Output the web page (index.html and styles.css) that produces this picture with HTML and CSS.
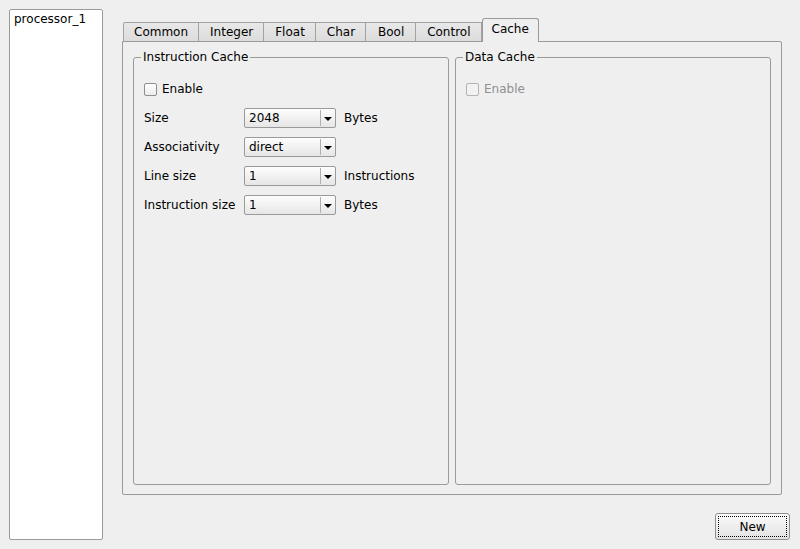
FILE: index.html
```html
<!DOCTYPE html>
<html lang="en">
<head>
    <meta charset="UTF-8">
    <title>Processor Settings</title>
    <link rel="stylesheet" href="styles.css">
</head>
<body>
    <div class="window">
        <div class="proc-list">
            <div class="proc-item">processor_1</div>
        </div>

        <div class="main">
            <div class="tab-bar">
                <div class="tab">Common</div>
                <div class="tab">Integer</div>
                <div class="tab">Float</div>
                <div class="tab">Char</div>
                <div class="tab">Bool</div>
                <div class="tab">Control</div>
                <div class="tab active">Cache</div>
            </div>

            <div class="tab-pane">
                <fieldset class="group">
                    <legend>Instruction Cache</legend>
                    <label class="check-row">
                        <span class="check"></span>
                        <span>Enable</span>
                    </label>
                    <div class="form">
                        <span class="field-label">Size</span>
                        <div class="combo"><span class="combo-text">2048</span><span class="combo-arrow"></span></div>
                        <span class="unit">Bytes</span>

                        <span class="field-label">Associativity</span>
                        <div class="combo"><span class="combo-text">direct</span><span class="combo-arrow"></span></div>
                        <span class="unit"></span>

                        <span class="field-label">Line size</span>
                        <div class="combo"><span class="combo-text">1</span><span class="combo-arrow"></span></div>
                        <span class="unit">Instructions</span>

                        <span class="field-label">Instruction size</span>
                        <div class="combo"><span class="combo-text">1</span><span class="combo-arrow"></span></div>
                        <span class="unit">Bytes</span>
                    </div>
                </fieldset>

                <fieldset class="group">
                    <legend>Data Cache</legend>
                    <label class="check-row disabled">
                        <span class="check"></span>
                        <span>Enable</span>
                    </label>
                </fieldset>
            </div>

            <div class="actions">
                <button class="btn">New</button>
            </div>
        </div>
    </div>
</body>
</html>
```

FILE: styles.css
```css
html, body {
    margin: 0;
    padding: 0;
}
body {
    font-family: "DejaVu Sans", sans-serif;
    font-size: 12px;
    color: #000;
    background-color: #efefef;
}
.window {
    display: flex;
    width: 800px;
    height: 549px;
    padding: 9px 10px 9px 9px;
    box-sizing: border-box;
}
.proc-list {
    width: 94px;
    height: 531px;
    box-sizing: border-box;
    background: #fff;
    border: 1px solid #9a9a9a;
    border-radius: 2px;
    padding: 1px 4px;
}
.proc-item {
    line-height: 16px;
}
.main {
    flex: 1;
    margin-left: 19px;
    padding-top: 9px;
    display: flex;
    flex-direction: column;
}

/* tabs */
.tab-bar {
    display: flex;
    align-items: flex-end;
    height: 23px;
    padding-left: 1px;
}
.tab {
    min-width: 50px;
    height: 19px;
    line-height: 19px;
    padding: 0 10px 0 11px;
    box-sizing: border-box;
    text-align: center;
    border: 1px solid #a2a2a2;
    border-bottom: none;
    border-left: none;
    background: linear-gradient(#e8e8e8, #dcdcdc);
}
.tab:first-child {
    padding-left: 10px;
    border-left: 1px solid #a2a2a2;
    border-top-left-radius: 2px;
}
.tab.active {
    position: relative;
    z-index: 1;
    height: 24px;
    line-height: 21px;
    margin-bottom: -1px;
    padding: 0 9px 0 9px;
    border: 1px solid #9a9a9a;
    border-bottom: none;
    border-radius: 3px 3px 0 0;
    background: #efefef;
}
.tab-pane {
    display: flex;
    gap: 6px;
    width: 660px;
    height: 454px;
    box-sizing: border-box;
    border: 1px solid #9a9a9a;
    border-radius: 0 2px 2px 2px;
    padding: 8px 10px 9px 10px;
}

/* group boxes */
.group {
    flex: 1;
    min-width: 0;
    margin: 0;
    padding: 18px 10px 0 10px;
    border: 1px solid #9a9a9a;
    border-radius: 3px;
}
.group legend {
    padding: 0 2px;
    margin-left: -3px;
    line-height: 14px;
}
.check-row {
    display: flex;
    align-items: center;
    gap: 5px;
    height: 14px;
}
.check {
    width: 11px;
    height: 11px;
    border: 1px solid #8e8e8e;
    border-radius: 2px;
    background: linear-gradient(#ffffff, #ececec);
}
.check-row.disabled {
    color: #8f8f8f;
}
.check-row.disabled .check {
    border-color: #b4b4b4;
    background: #f2f2f2;
}
.form {
    display: grid;
    grid-template-columns: 100px 92px auto;
    row-gap: 9px;
    align-items: center;
    margin-top: 12px;
}
.unit {
    margin-left: 8px;
}
.combo {
    display: flex;
    height: 20px;
    box-sizing: border-box;
    border: 1px solid #9a9a9a;
    border-radius: 2px;
    background: linear-gradient(#fdfdfd, #e6e6e6);
}
.combo-text {
    flex: 1;
    line-height: 18px;
    padding-left: 4px;
}
.combo-arrow {
    position: relative;
    width: 14px;
    margin: 1px 0;
    border-left: 1px solid #b0b0b0;
}
.combo-arrow::after {
    content: "";
    position: absolute;
    left: 3px;
    top: 7px;
    border-left: 4px solid transparent;
    border-right: 4px solid transparent;
    border-top: 4px solid #000;
}

/* bottom button */
.actions {
    display: flex;
    justify-content: flex-end;
    margin-top: 18px;
}
.btn {
    width: 75px;
    height: 27px;
    font-family: "DejaVu Sans", sans-serif;
    font-size: 12px;
    color: #000;
    border: 1px solid #8e8e8e;
    border-radius: 3px;
    background: linear-gradient(#fafafa, #e2e2e2);
    outline: 1px dotted #000;
    outline-offset: -4px;
    padding: 0;
}
```
